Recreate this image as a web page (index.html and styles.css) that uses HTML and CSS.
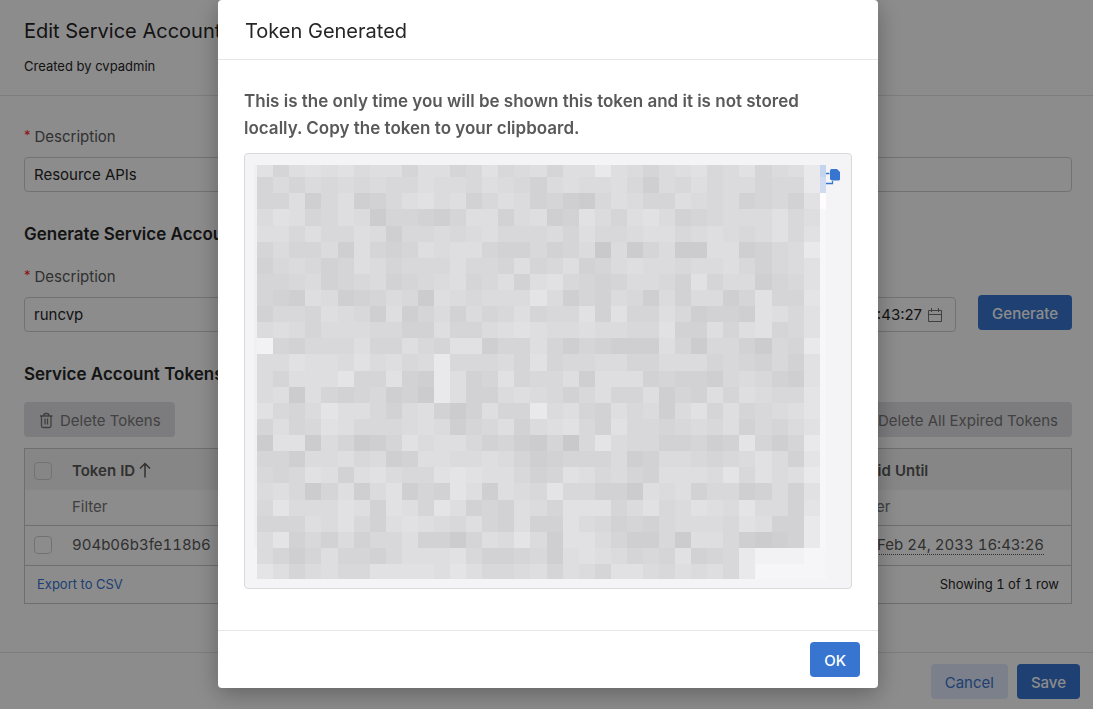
FILE: index.html
```html
<!DOCTYPE html>
<html lang="en">
<head>
<meta charset="utf-8">
<meta name="viewport" content="width=device-width, initial-scale=1">
<title>Edit Service Account</title>
<link rel="stylesheet" href="styles.css">
</head>
<body>
<div class="page">
  <header class="page-header">
    <h1 class="title">Edit Service Account</h1>
    <p class="subtitle">Created by cvpadmin</p>
  </header>
  <main class="page-body">
    <div class="field">
      <label class="label" for="account-desc"><span class="required">*</span>Description</label>
      <input class="input" id="account-desc" type="text" value="Resource APIs">
    </div>
    <h2 class="section-title">Generate Service Account Token</h2>
    <div class="form-row">
      <div class="field field-grow">
        <label class="label" for="token-desc"><span class="required">*</span>Description</label>
        <input class="input" id="token-desc" type="text" value="runcvp">
      </div>
      <div class="field field-date">
        <label class="label" for="valid-until"><span class="required">*</span>Valid Until</label>
        <div class="input date-box">
          <input class="date-input" id="valid-until" type="text" value="2033-02-24 16:43:27">
          <svg class="icon" viewBox="0 0 16 16" width="16" height="16" fill="none" stroke="currentColor"><path d="M1.5 3.5h13v11h-13zM1.5 7.5h13M4.5 1v4M11.5 1v4"/></svg>
        </div>
      </div>
      <button class="btn btn-primary" type="button">Generate</button>
    </div>
    <h2 class="section-title">Service Account Tokens</h2>
    <div class="toolbar">
      <button class="btn btn-disabled" type="button" disabled>
        <svg class="icon" viewBox="0 0 16 18" width="16" height="18" fill="none" stroke="currentColor" stroke-width="1.3"><path d="M2 4h12.500M5.500 4c0-1.600.8-2.500 2-2.500h1.500c1.200 0 2 .9 2 2.500M3.500 4v10c0 1 .5 1.500 1.500 1.500h6.500c1 0 1.500-.5 1.500-1.500V4M7 6.500v6M9.500 6.500v6"/></svg>
        Delete Tokens
      </button>
      <button class="btn btn-disabled" type="button" disabled>Delete All Expired Tokens</button>
    </div>
    <div class="table-box">
      <table class="tokens">
        <thead>
          <tr class="head-row">
            <th class="col-check"><input class="check" type="checkbox" aria-label="Select all tokens"></th>
            <th>Token ID <svg class="sort" viewBox="0 0 12 16" width="12" height="16" fill="none" stroke="currentColor" stroke-width="1.500"><path d="M6 15.500V1.500M1 6.500l5-5 5 5"/></svg></th>
            <th class="col-date">Valid Until</th>
          </tr>
          <tr class="filter-row">
            <td></td>
            <td><input class="filter" type="text" placeholder="Filter" aria-label="Filter by token ID"></td>
            <td><input class="filter" type="text" placeholder="Filter" aria-label="Filter by expiry"></td>
          </tr>
        </thead>
        <tbody>
          <tr class="data-row">
            <td><input class="check" type="checkbox" aria-label="Select token 904b06b3fe118b6"></td>
            <td>904b06b3fe118b6</td>
            <td class="date-cell"><span class="date">Feb 24, 2033 16:43:26</span></td>
          </tr>
        </tbody>
      </table>
      <div class="table-footer"><a class="export" href="#">Export to CSV</a><span>Showing 1 of 1 row</span></div>
    </div>
  </main>
  <footer class="page-footer">
    <button class="btn btn-soft" type="button">Cancel</button>
    <button class="btn btn-primary" type="button">Save</button>
  </footer>
</div>

<div class="overlay">
  <section class="modal" role="dialog" aria-modal="true" aria-labelledby="modal-title">
    <header class="modal-header"><h2 class="title" id="modal-title">Token Generated</h2></header>
    <div class="modal-body">
      <p class="notice">This is the only time you will be shown this token and it is not stored locally. Copy the token to your clipboard.</p>
      <div class="token-box">
        <svg class="mosaic" id="mosaic" viewBox="0 0 572 414" shape-rendering="crispEdges" role="img" aria-label="Hidden token"></svg>
        <button class="copy" type="button" aria-label="Copy token">
          <svg viewBox="0 0 16 18" width="16" height="18"><path fill="none" stroke="#3875d0" stroke-width="1.300" d="M0 6.500h3.500M0 16.500h6.500V14"/><path fill="#3875d0" d="M5.500 2h5.500l3 3v7q0 1.500-1.500 1.500h-6q-2.500 0-2.500-2V4q0-2 1.500-2z"/></svg>
        </button>
      </div>
    </div>
    <footer class="modal-footer"><button class="btn btn-primary btn-ok" type="button">OK</button></footer>
  </section>
</div>
<script src="mosaic.js"></script>
</body>
</html>
```
FILE: styles.css
```css
* { box-sizing: border-box; }

body {
  margin: 0;
  font-family: Inter, "Liberation Sans", sans-serif;
  font-size: 15px;
  line-height: 24px;
  color: #262626;
  background: #fff;
}

h1, h2, p { margin: 0; }
input, button { font: inherit; color: inherit; }

.page { min-height: 100vh; display: flex; flex-direction: column; overflow: hidden; }
.page-header { padding: 17px 24px 19px; border-bottom: 1px solid #e4e4e6; }
.title { font-size: 20px; line-height: 28px; font-weight: 400; }
.subtitle { font-size: 13px; line-height: 20px; margin-top: 11px; }
.page-body { flex: 1; padding: 29px 21px 0 24px; }

.field { display: flex; flex-direction: column; gap: 8px; }
.label { color: #595959; display: flex; gap: 4px; }
.required { color: #ff2020; font-size: 13px; line-height: 20px; }
.input {
  width: 100%;
  height: 35px;
  padding: 0 9px;
  border: 1px solid #d0d0d3;
  border-radius: 4px;
  background: transparent;
}
.section-title { font-size: 17px; line-height: 24px; font-weight: 600; margin: 30px 0 19px; }
.form-row { display: flex; align-items: flex-end; gap: 22px; }
.form-row .btn { margin-bottom: 2px; }
.field-grow { flex: 1; }
.field-date { width: 300px; }
.date-box { display: flex; align-items: center; justify-content: flex-end; padding: 0 12px; gap: 5px; }
.date-input { flex: 1; min-width: 0; border: 0; padding: 0; background: none; text-align: right; }
.icon { flex: none; color: #737373; }

.btn {
  display: inline-flex;
  align-items: center;
  justify-content: center;
  height: 35px;
  padding: 2px 14px 0;
  border: 0;
  border-radius: 4px;
  white-space: nowrap;
}
.btn-primary { background: #3875d0; color: #fff; font-weight: 500; }
.btn-soft { background: #e1e9fb; color: #3875d0; }
.btn-disabled { background: #e2e2e6; color: #777; gap: 6px; }
.toolbar { display: flex; justify-content: space-between; margin-top: -3px; }

.table-box { margin-top: 11px; border: 1px solid #c8c8ca; }
.tokens { width: 100%; border-collapse: collapse; table-layout: fixed; color: #595959; font-variant-numeric: tabular-nums; }
.tokens th, .tokens td { padding: 0; text-align: left; }
.col-check { width: 47px; }
.col-date { width: 216px; }
.head-row { height: 41px; background: #f5f5f5; }
.tokens .head-row th { font-weight: 600; padding-top: 3px; }
.filter-row { height: 35px; border-bottom: 1px solid #c8c8ca; }
.data-row { height: 40px; border-bottom: 1px solid #c8c8ca; }
.sort { vertical-align: -2px; }
.filter { width: 100%; border: 0; padding: 0; background: none; display: block; }
.filter::placeholder { color: #737373; opacity: 1; }
.check {
  appearance: none;
  display: block;
  width: 18px;
  height: 18px;
  margin: 0 9px;
  border: 1px solid #d0d0d3;
  border-radius: 4px;
}
.tokens .date-cell { padding-left: 22px; white-space: nowrap; }
.date { border-bottom: 1px dotted #595959; }
.table-footer {
  display: flex;
  justify-content: space-between;
  align-items: center;
  height: 37px;
  padding: 0 12px;
  font-size: 13px;
  font-variant-numeric: tabular-nums;
}
.export { color: #3875d0; text-decoration: none; }
.page-footer { display: flex; justify-content: flex-end; gap: 9px; padding: 11px 13px 10px; border-top: 1px solid #e4e4e6; }

.overlay {
  position: fixed;
  inset: 0;
  display: flex;
  justify-content: center;
  align-items: flex-start;
  padding-left: 3px;
  background: rgba(0, 0, 0, .45);
}
.modal {
  width: 660px;
  max-width: 100%;
  background: #fff;
  border-radius: 4px;
  box-shadow: 0 6px 24px rgba(0, 0, 0, .3);
}
.modal-header { padding: 17px 27px 14px; border-bottom: 1px solid #e6e6e6; }
.modal-body { padding: 28px 26px 41px; }
.notice { font-size: 17px; line-height: 27px; font-weight: 600; color: #595959; }
.token-box {
  display: flex;
  align-items: flex-start;
  margin-top: 11px;
  padding: 11px 9px 9px;
  border: 1px solid #d9d9db;
  border-radius: 4px;
  background: #f4f4f6;
}
.mosaic { flex: 1; min-width: 0; display: block; }
.copy { width: 16px; padding: 0; border: 0; background: none; line-height: 0; margin-top: 2px; }
.modal-footer { display: flex; justify-content: flex-end; padding: 11px 18px; border-top: 1px solid #e6e6e6; }
```
FILE: mosaic.js
```js
// Draws the pixelated cover over the token. Each character is a shade.
const rows = [
  "847878677477" + "458567477a76" + "4678568467a",
  "464656565576" + "657653676675" + "2657566455a",
  "447257235786" + "735763421576" + "44765634538",
  "687457614432" + "477367238647" + "86345666857",
  "775755762556" + "567555647556" + "77567656858",
  "464462743476" + "774335346061" + "4611772356a",
  "356534764555" + "755474573467" + "66566753568",
  "445634563456" + "745737854346" + "65384662458",
  "432762346517" + "656669624365" + "26366248449",
  "355476527246" + "364574558384" + "47523328758",
  "676466655337" + "446787667665" + "58337478458",
  "b43555744754" + "882447424322" + "2741553154a",
  "66877686756a" + "555648455664" + "46664543538",
  "64777944832a" + "734845572777" + "34332565328",
  "67174345231a" + "733676535744" + "72437476559",
  "854697753673" + "13744a674375" + "62684745679",
  "474587555676" + "245736785385" + "54565735468",
  "188164124867" + "753421405965" + "5334239424a",
  "442667562377" + "667642344462" + "36654568639",
  "545873786558" + "987753487564" + "3777695867a",
  "675147268243" + "972765955331" + "76735523638",
  "596668738749" + "734376488846" + "85687696639",
  "444768537876" + "574373386534" + "3566658733a",
  "693536355733" + "147696288642" + "2517752123a",
  "642474435777" + "853345278764" + "548345abbb.",
  "974675588887" + "975567476488" + "657675a...."
];
const shades = {
  0: "#c9c9cb", 1: "#cccccf", 2: "#cfcfd1", 3: "#d2d2d4", 4: "#d5d5d7",
  5: "#d8d8da", 6: "#dbdbdd", 7: "#dedee0", 8: "#e1e1e3", 9: "#e4e4e6",
  a: "#e9e9eb", b: "#f2f2f4"
};
const svg = document.getElementById("mosaic");
function block(x, y, w, h, fill) {
  const r = document.createElementNS("http://www.w3.org/2000/svg", "rect");
  for (const [k, v] of Object.entries({ x, y, width: w, height: h, fill })) r.setAttribute(k, v);
  svg.appendChild(r);
}
const left = c => 3 + c * 16 + (c >= 5) + (c >= 18) + (c >= 32);
const topEdge = r => r === 0 ? 0 : r === 26 ? 414 : r * 16 - 4 + (r >= 4) + (r >= 13) + (r >= 21);
block(0, 0, 3, 382, "#f0f0f2");
block(566, 44, 6, 339, "#f7f7fb");
block(502, 383, 70, 31, "#f6f6f9");
rows.forEach((row, r) => [...row].forEach((s, c) => {
  if (shades[s]) block(left(c), topEdge(r), left(c + 1) - left(c), topEdge(r + 1) - topEdge(r), shades[s]);
}));
block(566, 0, 6, 12, "#c2d4ee");
block(566, 12, 6, 16, "#d0dbf2");
block(566, 28, 6, 16, "#fefcfd");
```
